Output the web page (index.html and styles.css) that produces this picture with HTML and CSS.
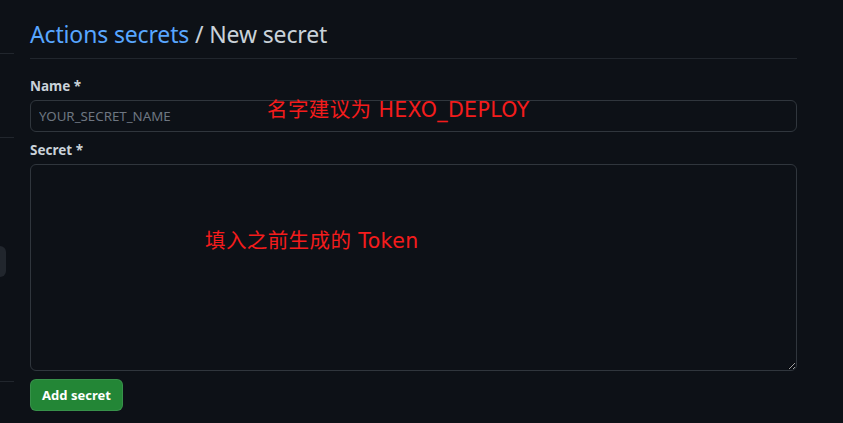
FILE: index.html
```html
<!DOCTYPE html>
<html lang="zh-CN">
<head>
<meta charset="utf-8">
<title>New secret</title>
<link rel="stylesheet" href="styles.css">
</head>
<body>
<div class="page">
  <aside class="sidebar">
    <div class="rule rule-1"></div>
    <div class="rule rule-2"></div>
    <div class="side-item"></div>
    <div class="rule rule-3"></div>
  </aside>
  <main class="main">
    <h1 class="title"><a class="crumb" href="#">Actions secrets</a> / New secret</h1>
    <form class="form">
      <div class="field">
        <label class="label" for="name">Name *</label>
        <div class="field-wrap">
          <input id="name" class="input" type="text" placeholder="YOUR_SECRET_NAME">
          <span class="note note-name">名字建议为 HEXO_DEPLOY</span>
        </div>
      </div>
      <div class="field">
        <label class="label" for="secret">Secret *</label>
        <div class="field-wrap">
          <textarea id="secret" class="textarea"></textarea>
          <span class="note note-token">填入之前生成的 Token</span>
        </div>
      </div>
      <button class="btn" type="button">Add secret</button>
    </form>
  </main>
</div>
</body>
</html>
```

FILE: styles.css
```css
html, body {
  margin: 0;
  padding: 0;
  background: #0d1117;
  height: 100%;
  overflow: hidden;
}
body {
  font-family: "Noto Sans", "Open Sans", "Liberation Sans", sans-serif;
  color: #c9d1d9;
}
.page {
  display: flex;
  gap: 16px;
}
.sidebar {
  width: 14px;
  display: flex;
  flex-direction: column;
}
.rule {
  height: 1px;
  background: #21262d;
}
.rule-1 { margin-top: 53px; }
.rule-2 { margin-top: 83px; }
.side-item {
  margin-top: 108px;
  width: 6px;
  height: 31px;
  background: #21262d;
  border-radius: 0 6px 6px 0;
}
.rule-3 { margin-top: 104px; }

.main {
  width: 767px;
}
.title {
  margin: 0;
  padding-top: 16px;
  padding-bottom: 6px;
  font-size: 23px;
  font-weight: 400;
  line-height: 36px;
  color: #c9d1d9;
  border-bottom: 1px solid #21262d;
  letter-spacing: -0.15px;
}
.crumb {
  color: #58a6ff;
  text-decoration: none;
}
.form {
  display: flex;
  flex-direction: column;
  padding-top: 17px;
}
.field {
  display: flex;
  flex-direction: column;
  margin-bottom: 8px;
}
.label {
  font-size: 13.5px;
  font-weight: 700;
  line-height: 21px;
  margin-bottom: 3px;
  color: #c9d1d9;
}
.field-wrap {
  position: relative;
}
.input {
  box-sizing: border-box;
  width: 100%;
  height: 32px;
  padding: 5px 8px;
  background: #0d1117;
  border: 1px solid #30363d;
  border-radius: 6px;
  color: #c9d1d9;
  font-family: inherit;
  font-size: 13.3px;
  display: block;
}
.input::placeholder {
  color: #6e7681;
}
.textarea {
  box-sizing: border-box;
  width: 100%;
  height: 207px;
  display: block;
  background: #0d1117;
  border: 1px solid #30363d;
  border-radius: 6px;
  color: #c9d1d9;
  font-family: inherit;
  resize: vertical;
}
.field + .field {
  margin-bottom: 8px;
}
.note {
  position: absolute;
  color: #f41c1c;
  font-family: "DejaVu Sans", "Noto Sans CJK SC", sans-serif;
  font-size: 20.5px;
  letter-spacing: 0.4px;
  line-height: 24px;
  white-space: nowrap;
  pointer-events: none;
}
.note-name {
  left: 237px;
  top: -2px;
}
.note-token {
  left: 175px;
  top: 65px;
}
.btn {
  align-self: flex-start;
  height: 32px;
  width: 93px;
  padding: 0;
  background: #238636;
  border: 1px solid rgba(240, 246, 252, 0.1);
  border-radius: 6px;
  color: #ffffff;
  font-family: inherit;
  font-size: 13px;
  font-weight: 700;
  cursor: pointer;
}
```
